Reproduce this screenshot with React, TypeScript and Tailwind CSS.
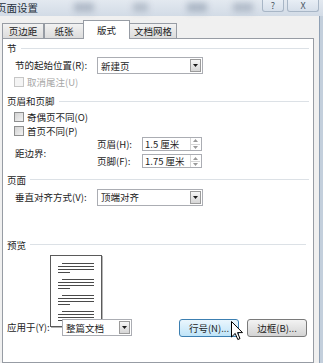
import type { ReactNode } from 'react';

const FONT = "font-['Noto_Sans_CJK_SC','Microsoft_YaHei',sans-serif]";

function SectionHeader({ label }: { label: string }) {
  return (
    <div className="flex items-center h-[12px] pl-[4px] pr-[4px] gap-[4px]">
      <span className="leading-[12px]">{label}</span>
      <div className="flex-1 h-px bg-[#dce1e6]" />
    </div>
  );
}

function CheckRow({ label, disabled }: { label: string; disabled?: boolean }) {
  return (
    <div className="flex items-center h-[14px] pl-[11px] gap-[3px]">
      <div
        className={`w-[10px] h-[10px] border ${
          disabled ? 'border-[#c6c6c6] bg-[#f4f4f4]' : 'border-[#8e8f8f] bg-gradient-to-br from-[#d2d2d2] to-[#f3f3f3]'
        }`}
      />
      <span className={disabled ? 'text-[#a6a6a6]' : ''}>{label}</span>
    </div>
  );
}

function DropArrow() {
  return (
    <div className="w-[11px] h-[13px] mr-[1px] border border-[#9b9b9b] bg-gradient-to-b from-[#f6f6f6] to-[#d6d6d6] flex items-center justify-center">
      <svg width="5" height="3" viewBox="0 0 5 3">
        <polygon points="0,0 5,0 2.5,3" fill="#1a1a1a" />
      </svg>
    </div>
  );
}

function Combo({ value, className }: { value: string; className: string }) {
  return (
    <div className={`h-[17px] border border-[#abadb3] bg-white flex items-center ${className}`}>
      <span className="flex-1 pl-[3px] leading-[12px]">{value}</span>
      <DropArrow />
    </div>
  );
}

function SpinBox({ value }: { value: string }) {
  return (
    <div className="h-[14px] w-[60px] border border-[#abadb3] bg-white flex items-center">
      <span className="flex-1 pl-[2px] leading-[12px] whitespace-pre">{value}</span>
      <div className="w-[10px] h-[12px] mr-[1px] flex flex-col border-l border-[#d6d6d6]">
        <div className="flex-1 flex items-center justify-center border-b border-[#d6d6d6]">
          <svg width="5" height="3" viewBox="0 0 5 3">
            <polygon points="0,3 5,3 2.5,0" fill="#9a9a9a" />
          </svg>
        </div>
        <div className="flex-1 flex items-center justify-center">
          <svg width="5" height="3" viewBox="0 0 5 3">
            <polygon points="0,0 5,0 2.5,3" fill="#9a9a9a" />
          </svg>
        </div>
      </div>
    </div>
  );
}

function Tab({ label, width, selected }: { label: string; width: string; selected?: boolean }) {
  return (
    <div
      className={`${width} flex items-center justify-center border border-b-0 border-[#979ca4] ${
        selected ? 'h-[19px] bg-white relative z-10 mb-[-1px] mx-[-1px]' : 'h-[15px] bg-gradient-to-b from-[#f2f2f2] to-[#dcdcdc]'
      }`}
    >
      <span className="leading-[12px]">{label}</span>
    </div>
  );
}

function Button({ children, hover }: { children: ReactNode; hover?: boolean }) {
  return (
    <div
      className={`w-[60px] h-[18px] rounded-[3px] border flex items-center justify-center ${
        hover
          ? 'border-[#3c7fb1] bg-gradient-to-b from-[#eaf6fd] to-[#bfe4f8]'
          : 'border-[#7a7a7a] bg-gradient-to-b from-[#f3f3f3] to-[#d4d4d4]'
      }`}
    >
      <span className="leading-[12px]">{children}</span>
    </div>
  );
}

function PreviewPage() {
  const groups = [8, 24, 40, 56];
  return (
    <div className="ml-[47px] mt-[4px] w-[52px] h-[72px] border border-[#5a5a5a] bg-white shadow-[1px_1px_0_#b5b5b5]">
      <svg width="50" height="70" viewBox="0 0 50 70">
        {groups.map((g) => (
          <g key={g} stroke="#4a4a4a" strokeWidth="1">
            <line x1="11" y1={g - 0.5} x2="43" y2={g - 0.5} />
            <line x1="7" y1={g + 2.5} x2="43" y2={g + 2.5} />
            <line x1="7" y1={g + 5.5} x2="43" y2={g + 5.5} />
            <line x1="7" y1={g + 8.5} x2="19" y2={g + 8.5} />
          </g>
        ))}
      </svg>
    </div>
  );
}

export default function App() {
  return (
    <div className={`w-[323px] h-[363px] overflow-hidden relative flex flex-col text-[9.5px] text-[#1c1c1c] ${FONT}`}>
      {/* title bar */}
      <div className="h-[16px] relative bg-gradient-to-b from-[#e3e9f0] to-[#d2dbe6] flex items-center">
        <div className="absolute left-[74px] top-[3px] w-[20px] h-[9px] bg-[#aeb8c6] blur-[3px]" />
        <div className="absolute left-[133px] top-[3px] w-[15px] h-[9px] bg-[#b3bdca] blur-[3px]" />
        <div className="absolute left-[187px] top-[3px] w-[20px] h-[9px] bg-[#aab5c4] blur-[3px]" />
        <div className="absolute left-[233px] top-[3px] w-[20px] h-[9px] bg-[#b0bac8] blur-[3px]" />
        <span className="ml-[-4px] text-[10.5px] leading-[12px] text-[#27313d] relative">页面设置</span>
        <div className="absolute right-[39px] top-0 w-[22px] h-[12px] border border-t-0 border-[#a8b6c6] rounded-b-[3px] bg-gradient-to-b from-[#e8eef5] to-[#d6dfea] flex items-center justify-center text-[9px] leading-[10px] text-[#4b5663]">
          ?
        </div>
        <div className="absolute right-[4px] top-0 w-[32px] h-[12px] border border-t-0 border-[#a8b6c6] rounded-b-[3px] bg-gradient-to-b from-[#e8eef5] to-[#d6dfea] flex items-center justify-center text-[9px] leading-[10px] text-[#4b5663]">
          X
        </div>
      </div>

      <div className="flex-1 flex">
        <div className="flex-1 bg-[#f0f0f0] flex flex-col">
          {/* tabs */}
          <div className="mt-[4px] h-[18px] pl-[2px] flex items-end">
            <Tab label="页边距" width="w-[42px]" />
            <Tab label="纸张" width="w-[40px]" />
            <Tab label="版式" width="w-[47px]" selected />
            <Tab label="文档网格" width="w-[48px]" />
          </div>

          {/* tab panel */}
          <div className="ml-[2px] w-[312px] flex-1 border border-[#979ca4] bg-white flex flex-col">
            <div className="mt-[3px]">
              <SectionHeader label="节" />
            </div>
            <div className="mt-[3px] flex items-center pl-[12px]">
              <span className="w-[82px]">节的起始位置(R):</span>
              <Combo value="新建页" className="w-[106px]" />
            </div>
            <div className="mt-[1px]">
              <CheckRow label="取消尾注(U)" disabled />
            </div>

            <div className="mt-[6px]">
              <SectionHeader label="页眉和页脚" />
            </div>
            <div className="mt-[3px]">
              <CheckRow label="奇偶页不同(O)" />
              <CheckRow label="首页不同(P)" />
            </div>
            <div className="mt-[-1px] flex items-center pl-[12px]">
              <span className="w-[82px]">距边界:</span>
              <div className="flex flex-col gap-[3px]">
                <div className="flex items-center">
                  <span className="w-[45px]">页眉(H):</span>
                  <SpinBox value="1.5 厘米" />
                </div>
                <div className="flex items-center">
                  <span className="w-[45px]">页脚(F):</span>
                  <SpinBox value="1.75 厘米" />
                </div>
              </div>
            </div>

            <div className="mt-[5px]">
              <SectionHeader label="页面" />
            </div>
            <div className="mt-[3px] flex items-center pl-[12px]">
              <span className="w-[82px]">垂直对齐方式(V):</span>
              <Combo value="顶端对齐" className="w-[106px]" />
            </div>

            <div className="mt-[33px] pr-[3px]">
              <SectionHeader label="预览" />
            </div>
            <PreviewPage />

            <div className="mt-[-8px] flex items-center pl-[4px]">
              <span className="w-[55px]">应用于(Y):</span>
              <Combo value="整篇文档" className="w-[70px]" />
              <div className="ml-[47px]">
                <Button hover>行号(N)...</Button>
              </div>
              <div className="ml-[8px]">
                <Button>边框(B)...</Button>
              </div>
            </div>
          </div>
        </div>
        {/* right window frame */}
        <div className="w-[4px] bg-[#c3cfdc] border-l border-[#8fa0b4]" />
      </div>

      {/* mouse cursor */}
      <svg className="absolute left-[231px] top-[321px]" width="12" height="20" viewBox="0 0 12 20">
        <path d="M0.5 0.5 L0.5 16 L4.2 12.4 L6.8 18.5 L9 17.6 L6.5 11.6 L11.5 11.6 Z" fill="#ffffff" stroke="#000000" strokeWidth="1" strokeLinejoin="miter" />
      </svg>
    </div>
  );
}
